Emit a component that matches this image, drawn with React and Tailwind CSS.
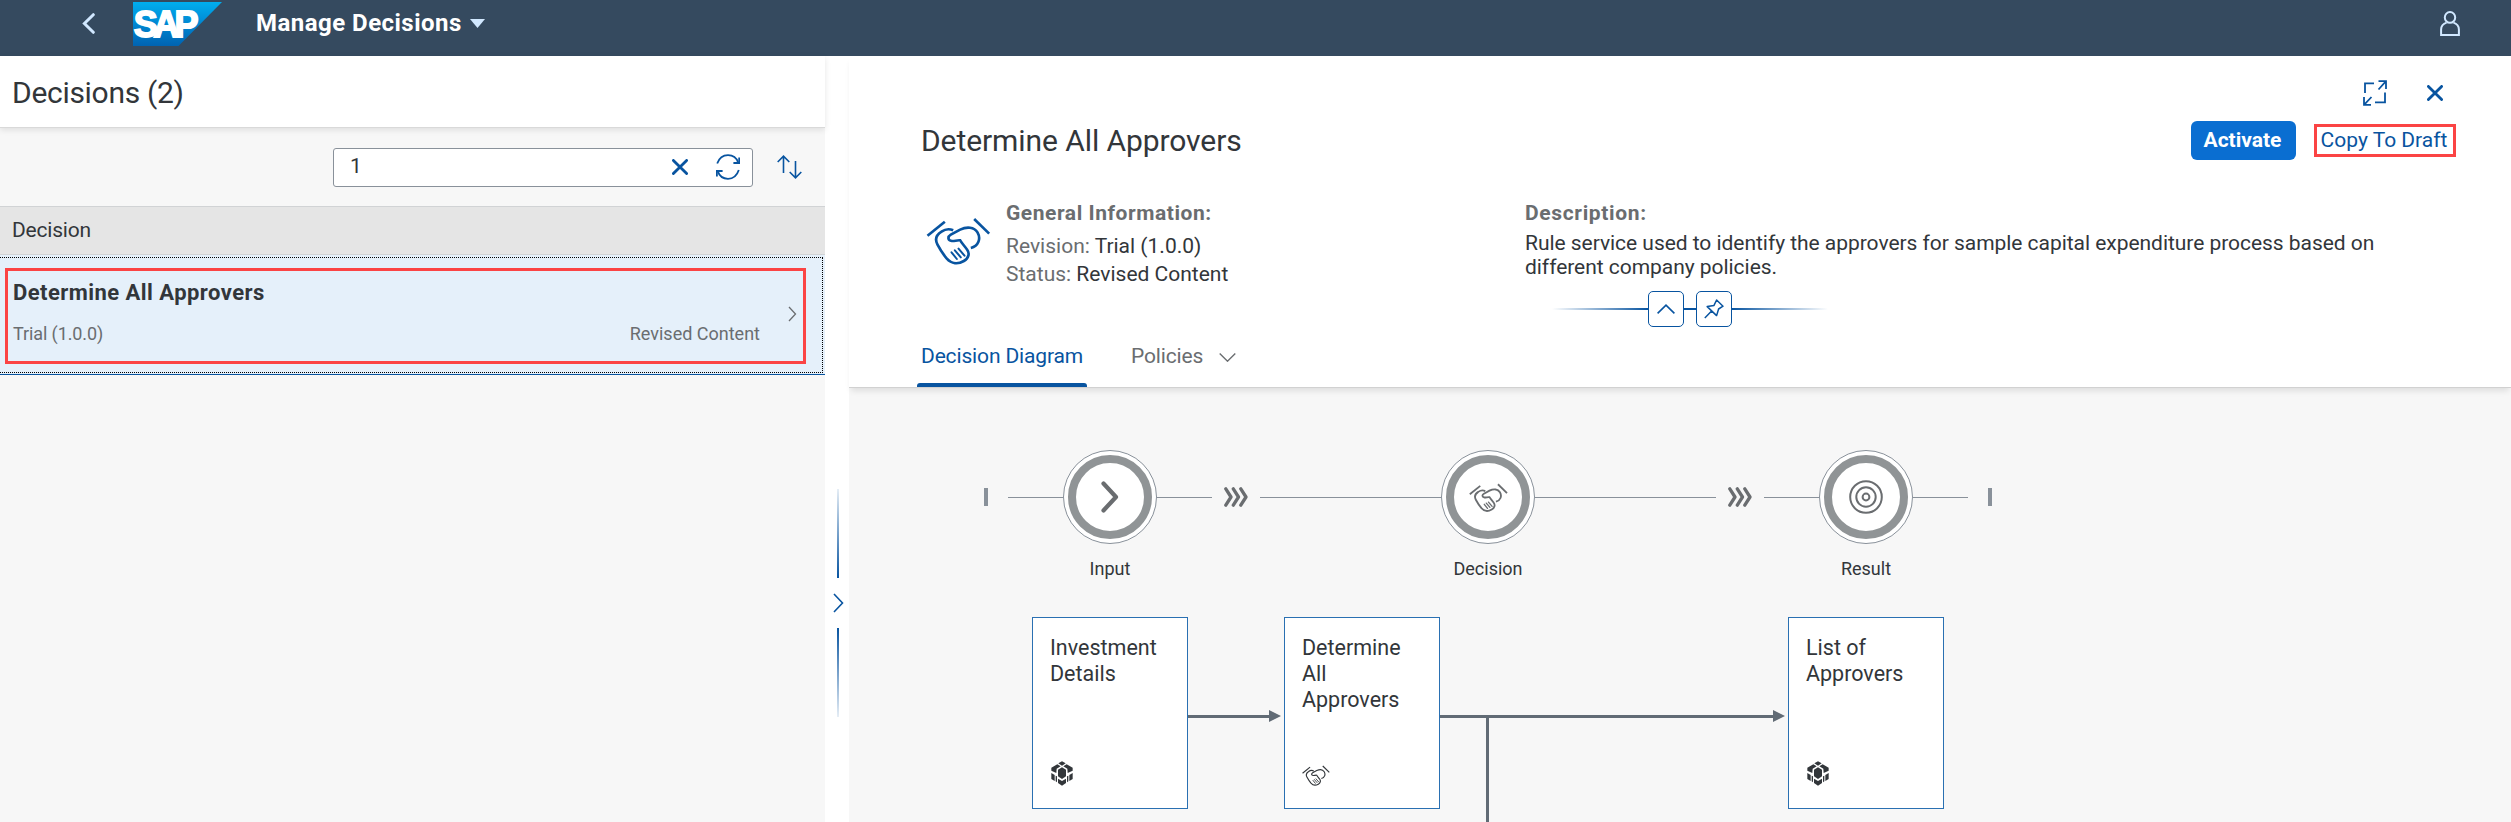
const Handshake = ({ className, stroke = 8 }) => (
  <svg className={className} viewBox="78 84 194 144" fill="none" stroke="currentColor" strokeWidth={stroke}>
    <path d="M82 140 L134 98" />
    <path d="M222 90 L267 134" />
    <path d="M159 124 C146 118 134 121 124 128 C108 138 104 152 112 167 C120 182 130 197 140 209 C154 225 174 226 191 216 C206 207 209 193 201 182 C194 172 186 164 180 154 C170 153 163 157 155 156 C142 154 142 143 152 137 L180 122 C200 112 222 114 232 130 C243 149 235 171 212 177" />
    <path d="M154 190 L170 210 M164 184 L182 205 M175 179 L193 200" strokeLinecap="round" strokeWidth={stroke * 0.75} />
  </svg>
);

const Cube = ({ className }) => (
  <svg className={className} viewBox="63 65 66 75" fill="currentColor">
    <path d="M96 66 L107 72 L96 79 L85 72 Z" />
    <path d="M82 75 L92 81 L80 88 L79 101 L64 94 V85 Z" />
    <path d="M110 75 L100 81 L112 88 L113 101 L128 94 V85 Z" />
    <path d="M96 84 L108 91 V111 L96 119 L84 111 V91 Z" />
    <path d="M64 101 L74 107 V125 L64 119 Z" />
    <path d="M128 101 L118 107 V125 L128 119 Z" />
    <path d="M77 109 L81 111 V129 L77 126 Z" />
    <path d="M115 109 L111 111 V129 L115 126 Z" />
    <path d="M84 118 L96 125 L108 118 V131 L96 139 L84 131 Z" />
  </svg>
);

const Cross = ({ className }) => (
  <svg className={className} viewBox="0 0 16 16" fill="none" stroke="currentColor" strokeWidth="2.8" strokeLinecap="round">
    <path d="M1.4 1.4 L14.6 14.6 M14.6 1.4 L1.4 14.6" />
  </svg>
);

const Triple = () => (
  <svg className="mx-3 h-[20px] w-6 shrink-0 text-[#6a6d70]" viewBox="0 0 24 20" fill="none" stroke="currentColor" strokeWidth="3.3" strokeLinecap="round" strokeLinejoin="round">
    <path d="M1.8 1.8 L7 10 L1.8 18.2 M9.3 1.8 L14.5 10 L9.3 18.2 M16.8 1.8 L22 10 L16.8 18.2" />
  </svg>
);

const Line = ({ className }) => <div className={`h-px shrink-0 bg-[#89919a] ${className}`} />;

const Step = ({ label, children }) => (
  <div className="relative flex size-[94px] shrink-0 items-center justify-center rounded-full border border-[#89919a] bg-white">
    <div className="flex size-[84px] items-center justify-center rounded-full border-8 border-[#909496] bg-white text-[#6a6d70]">
      {children}
    </div>
    <span className="absolute top-[106px] text-[18px] leading-6 text-[#32363a]">{label}</span>
  </div>
);

const Card = ({ className, title, children }) => (
  <div className={`absolute top-[229px] flex h-[192px] w-[156px] flex-col justify-between border border-[#2a70b2] bg-white px-[17px] pt-[17px] pb-[22px] ${className}`}>
    <p className="text-[21.5px] leading-[26px]">{title}</p>
    {children}
  </div>
);

const Arrow = ({ className }) => (
  <div className={`absolute top-[322px] flex h-3 items-center text-[#616b75] ${className}`}>
    <div className="h-[3px] flex-1 bg-[#616b75]" />
    <svg className="h-3 w-3" viewBox="0 0 12 12" fill="currentColor"><path d="M0 0 L12 6 L0 12 Z" /></svg>
  </div>
);

function ShellBar() {
  return (
    <header className="flex h-14 shrink-0 items-start bg-[#354a5f] pr-[51px] pl-[82px] text-[#d1e8ff]">
      <svg className="mt-[13px] h-[21px] w-[13px]" viewBox="0 0 13 21" fill="none" stroke="currentColor" strokeWidth="3" strokeLinecap="round">
        <path d="M11.3 1.7 L2.4 10.5 L11.3 19.3" />
      </svg>
      <svg className="mt-[2px] ml-[38px] h-11 w-[89px]" viewBox="0 0 89 44">
        <defs>
          <linearGradient id="sap" x1="0" y1="0" x2="0" y2="1">
            <stop offset="0" stopColor="#00aeef" />
            <stop offset="0.5" stopColor="#0087d2" />
            <stop offset="1" stopColor="#0063b1" />
          </linearGradient>
        </defs>
        <path d="M0 0 H89 L45.5 44 H0 Z" fill="url(#sap)" />
        <text x="0.8" y="34.8" fill="#fff" stroke="#fff" strokeWidth="1.8" fontFamily="Liberation Sans, sans-serif" fontWeight="bold" fontSize="36" letterSpacing="-4.6">SAP</text>
      </svg>
      <h1 className="ml-[34px] text-[24px] leading-[46px] font-bold tracking-[0.47px] text-white">Manage Decisions</h1>
      <svg className="mt-[19px] ml-[8px] h-[9px] w-[15px]" viewBox="0 0 15 9" fill="currentColor"><path d="M0 0 H15 L7.5 9 Z" /></svg>
      <svg className="mt-[11px] ml-auto h-[25px] w-[20px]" viewBox="0 0 20 25" fill="none" stroke="currentColor" strokeWidth="2">
        <ellipse cx="10" cy="6.4" rx="5.2" ry="5.4" />
        <path d="M6.6 11.6 C3.4 12.6 1.1 15 1.1 18.5 V23.9 H18.9 V18.5 C18.9 15 16.6 12.6 13.4 11.6" />
      </svg>
    </header>
  );
}

function MasterList() {
  return (
    <section className="flex w-[825px] shrink-0 flex-col bg-[#f7f7f7]">
      <div className="relative h-[72px] border-b border-[#d9d9d9] bg-white pt-[9px] pl-[12px] shadow-[0_2px_6px_rgba(0,0,0,0.1)]">
        <h2 className="text-[30px] leading-[56px] tracking-[-0.3px]">Decisions (2)</h2>
      </div>
      <div className="flex h-[78px] items-center pr-[23px] text-[#0854a0]">
        <div className="ml-[333px] flex h-[39px] w-[420px] items-center rounded-[3px] border border-[#89919a] bg-white pr-[12px] pl-[16px]">
          <span className="text-[21px] text-[#32363a]">1</span>
          <Cross className="mr-[28px] ml-auto size-4" />
          <svg className="h-[26px] w-6" viewBox="0 0 24 26" fill="none" stroke="currentColor" strokeWidth="1.8">
            <path d="M1.2 9.5 C3.2 4 7.5 1.2 12 1.2 C17 1.2 20.6 4 22.2 8.6" />
            <path d="M22.8 16 C20.8 22 16.5 24.8 12 24.8 C7 24.8 3.4 22 1.8 17.4" />
            <path d="M23.2 3.6 V9 H17.4 M0.9 22.4 V17 H6.6" />
          </svg>
        </div>
        <svg className="ml-auto h-6 w-[25px]" viewBox="0 0 25 24" fill="none" stroke="currentColor" strokeWidth="1.6">
          <path d="M6.5 18 V1.4 M0.7 7 L6.5 1.2 L12.3 7 M18.5 6 V22.6 M12.7 17 L18.5 22.8 L24.3 17" />
        </svg>
      </div>
      <div className="flex h-[49px] items-center border-y border-[#d1d3d5] bg-[#e5e5e5] pl-[12px] text-[21px] tracking-[-0.2px]">Decision</div>
      <div className="border-b border-[#0854a0] bg-[#e5f0fa] pt-[2px] pr-[2px] pb-px">
        <div className="border-y border-r border-dotted border-black pt-[10px] pr-[16px] pb-[8px] pl-[5px]">
          <div className="flex h-[96px] w-[801px] items-center justify-between border-[3px] border-[#fb4444] pr-[6px] pl-[5px]">
            <div className="mb-[5px] flex w-[747px] flex-col">
              <p className="text-[22px] leading-[41px] font-bold tracking-[0.45px]">Determine All Approvers</p>
              <p className="flex justify-between text-[18px] leading-[42px] text-[#6a6d70]">
                <span className="tracking-[-0.1px]">Trial (1.0.0)</span>
                <span>Revised Content</span>
              </p>
            </div>
            <svg className="mb-1 h-4 w-[9px] text-[#6a6d70]" viewBox="0 0 9 16" fill="none" stroke="currentColor" strokeWidth="1.3"><path d="M1 1 L7.5 8 L1 15" /></svg>
          </div>
        </div>
      </div>
    </section>
  );
}

function Splitter() {
  return (
    <div className="flex w-6 shrink-0 flex-col items-center bg-white pt-[433px] pl-[2px]">
      <div className="h-[89px] w-[2px] bg-linear-to-b from-[#0854a0]/10 to-[#0854a0]" />
      <svg className="my-[15px] h-5 w-[11px] text-[#0854a0]" viewBox="0 0 11 20" fill="none" stroke="currentColor" strokeWidth="1.6"><path d="M1 1 L9.5 10 L1 19" /></svg>
      <div className="h-[89px] w-[2px] bg-linear-to-b from-[#0854a0] to-[#0854a0]/10" />
    </div>
  );
}

function DetailHeader() {
  return (
    <div className="relative h-[332px] border-b border-[#d1d1d1] bg-white shadow-[0_5px_6px_-2px_rgba(0,0,0,0.1)]">
      <div className="flex h-[65px] items-center justify-end pt-[8px] pr-[68px] text-[#0854a0]">
        <svg className="mr-[40px] h-[26px] w-[24px]" viewBox="0 0 24 26" fill="none" stroke="currentColor" strokeWidth="1.8">
          <path d="M2 13 V3.4 H11 M22 12.5 V22.4 H12" />
          <path d="M15.5 1.2 H23 V9 M23 1.2 L15.5 9.5 M8 24.8 H1 V17 M1 24.8 L8.5 17" />
        </svg>
        <Cross className="size-4" />
      </div>
      <div className="flex h-[39px] items-center pr-[55px] pl-[72px]">
        <h2 className="text-[30px] leading-[39px] tracking-[-0.08px]">Determine All Approvers</h2>
        <button className="ml-auto h-[39px] w-[105px] rounded-[6px] bg-[#0a6ed1] pr-[2px] text-[21px] font-bold text-white">Activate</button>
        <div className="ml-[18px] flex h-[33px] w-[142px] items-center justify-center border-[3px] border-[#fb4444] pr-[2px] text-[21px] whitespace-nowrap text-[#0854a0]">Copy To Draft</div>
      </div>
      <div className="flex h-[131px] pl-[77px] text-[21px]">
        <Handshake className="mt-[57px] h-[48px] w-[65px] text-[#0854a0]" />
        <div className="ml-[15px] w-[519px] pt-[38px]">
          <h3 className="leading-[30px] font-bold tracking-[0.55px] text-[#6a6d70]">General Information:</h3>
          <p className="mt-[4px] leading-7"><span className="text-[#6a6d70]">Revision:</span> Trial (1.0.0)</p>
          <p className="leading-7"><span className="text-[#6a6d70]">Status:</span> Revised Content</p>
        </div>
        <div className="pt-[38px]">
          <h3 className="leading-[30px] font-bold tracking-[0.65px] text-[#6a6d70]">Description:</h3>
          <p className="mt-[3px] w-[880px] leading-6 tracking-[-0.04px]">
            Rule service used to identify the approvers for sample capital expenditure process based on different company policies.
          </p>
        </div>
      </div>
      <div className="flex h-9 items-center pl-[703px] text-[#0854a0]">
        <div className="h-[2px] w-[96px] bg-linear-to-r from-[#0854a0]/0 to-[#0854a0]" />
        <div className="flex size-9 items-center justify-center rounded-[5px] border border-[#0854a0]">
          <svg className="h-[10px] w-[18px]" viewBox="0 0 18 10" fill="none" stroke="currentColor" strokeWidth="1.6"><path d="M0.6 9.3 L9 1.2 L17.4 9.3" /></svg>
        </div>
        <div className="h-[2px] w-3 bg-[#0854a0]" />
        <div className="flex size-9 items-center justify-center rounded-[5px] border border-[#0854a0]">
          <svg className="h-5 w-5" viewBox="0 0 20 20" fill="none" stroke="currentColor" strokeWidth="1.5" strokeLinejoin="round">
            <path d="M12.6 1 L19 7.2 L14.6 10 L12.6 16.6 L3.2 7.6 L10 6.4 Z M7.6 12 L0.8 19" />
          </svg>
        </div>
        <div className="h-[2px] w-[96px] bg-linear-to-r from-[#0854a0] to-[#0854a0]/0" />
      </div>
      <nav className="flex h-[60px] pl-[68px] text-[21px]">
        <div className="flex w-[170px] flex-col justify-between text-[#0854a0]">
          <span className="h-[56px] pl-[4px] leading-[59px] tracking-[-0.15px] whitespace-nowrap">Decision Diagram</span>
          <div className="h-1 rounded-t-[3px] bg-[#0854a0]" />
        </div>
        <span className="ml-[44px] w-[72px] leading-[59px] tracking-[-0.15px] text-[#6a6d70]">Policies</span>
        <svg className="mt-[26px] ml-[16px] h-[9px] w-[17px] text-[#6a6d70]" viewBox="0 0 17 9" fill="none" stroke="currentColor" strokeWidth="1.4"><path d="M0.7 0.6 L8.5 8.2 L16.3 0.6" /></svg>
      </nav>
    </div>
  );
}

function Diagram() {
  return (
    <div className="relative flex-1 overflow-hidden pt-[62px] pl-[135px]">
      <div className="flex h-[94px] items-center">
        <div className="mr-5 h-[18px] w-1 bg-[#89919a]" />
        <Line className="w-[55px]" />
        <Step label="Input">
          <svg className="h-[32px] w-[18px]" viewBox="0 0 18 32" fill="none" stroke="currentColor" strokeWidth="4.2" strokeLinecap="round" strokeLinejoin="round"><path d="M2.5 2.5 L15 16 L2.5 29.5" /></svg>
        </Step>
        <Line className="w-[55px]" />
        <Triple />
        <Line className="w-[181px]" />
        <Step label="Decision">
          <Handshake className="h-[29px] w-[39px]" stroke={9} />
        </Step>
        <Line className="w-[181px]" />
        <Triple />
        <Line className="w-[55px]" />
        <Step label="Result">
          <svg className="size-[34px]" viewBox="0 0 34 34" fill="none" stroke="currentColor" strokeWidth="2">
            <circle cx="17" cy="17" r="15.8" />
            <circle cx="17" cy="17" r="9.7" />
            <circle cx="17" cy="17" r="3.4" />
          </svg>
        </Step>
        <Line className="w-[55px]" />
        <div className="ml-5 h-[18px] w-1 bg-[#89919a]" />
      </div>
      <Card className="left-[183px]" title="Investment Details"><Cube className="ml-px h-[25px] w-[22px]" /></Card>
      <Arrow className="left-[339px] w-[93px]" />
      <Card className="left-[435px]" title={<>Determine<br />All<br />Approvers</>}><Handshake className="h-[21px] w-[28px]" stroke={8} /></Card>
      <Arrow className="left-[591px] w-[345px]" />
      <div className="absolute top-[328px] bottom-0 left-[637px] w-[3px] bg-[#616b75]" />
      <Card className="left-[939px]" title={<>List of<br />Approvers</>}><Cube className="ml-px h-[25px] w-[22px]" /></Card>
    </div>
  );
}

export default function App() {
  return (
    <div className="flex h-[822px] w-[2511px] flex-col overflow-hidden bg-white font-['Roboto',sans-serif] text-[#32363a]">
      <ShellBar />
      <div className="flex min-h-0 flex-1">
        <MasterList />
        <Splitter />
        <main className="flex min-w-0 flex-1 flex-col bg-[#f7f7f7]">
          <DetailHeader />
          <Diagram />
        </main>
      </div>
    </div>
  );
}
